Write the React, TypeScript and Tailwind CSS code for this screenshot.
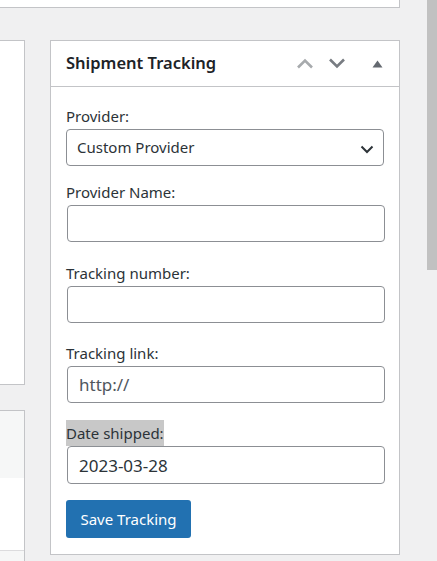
const font = { fontFamily: '"Noto Sans", "Open Sans", sans-serif' };

function Chevron({ up, color }: { up?: boolean; color: string }) {
  return (
    <svg width="18" height="11" viewBox="0 0 18 11" fill="none">
      <path
        d={up ? 'M2 9.5 L9 2.5 L16 9.5' : 'M2 1.5 L9 8.5 L16 1.5'}
        stroke={color}
        strokeWidth="2.6"
      />
    </svg>
  );
}

function Field({ label, value, gap = 'mt-[17px]' }: { label: string; value?: string; gap?: string }) {
  return (
    <div className={gap}>
      <label className="block h-[26px] text-[15px] leading-[26px] text-[#2c3338]">{label}</label>
      <input
        readOnly
        defaultValue={value}
        className="block w-[318px] h-[37px] ml-px rounded-[4px] border border-[#8c8f94] bg-white px-[11px] text-[17px] text-[#50575e] outline-none"
        style={font}
      />
    </div>
  );
}

export default function App() {
  return (
    <div className="flex w-[437px] h-[561px] overflow-hidden bg-[#f0f0f1]" style={font}>
      <div className="w-[400px] shrink-0">
        <div className="h-[8px] bg-white border-b border-r border-[#c3c4c7]" />
        <div className="mt-[32px] flex">
          {/* left column boxes */}
          <div className="w-[25px] shrink-0">
            <div className="h-[345px] bg-white border-t border-r border-b border-[#c3c4c7]" />
            <div className="mt-[25px] border-t border-r border-[#c3c4c7]">
              <div className="h-[67px] bg-[#f6f7f7]" />
              <div className="h-[73px] bg-white border-b border-[#dcdcde]" />
              <div className="h-[20px] bg-[#f6f7f7]" />
            </div>
          </div>

          {/* shipment tracking panel */}
          <div className="ml-[25px] w-[350px] h-[515px] bg-white border border-[#c3c4c7]">
            <div className="flex items-center h-[46px] border-b border-[#c3c4c7] pl-[15px] pr-[16px]">
              <h2 className="text-[16.5px] font-semibold text-[#1d2327] leading-none">Shipment Tracking</h2>
              <div className="ml-auto flex items-center">
                <Chevron up color="#a7aaad" />
                <div className="ml-[14px]">
                  <Chevron color="#787c82" />
                </div>
                <svg className="ml-[26px]" width="11" height="8" viewBox="0 0 11 8">
                  <path d="M0.5 7.5 L5.5 0.5 L10.5 7.5 Z" fill="#646970" />
                </svg>
              </div>
            </div>

            <div className="pl-[15px] pt-[16px]">
              <div>
                <label className="block h-[26px] text-[15px] leading-[26px] text-[#2c3338]">Provider:</label>
                <div className="relative w-[318px] h-[37px] rounded-[4px] border border-[#8c8f94] bg-white flex items-center pl-[10px]">
                  <span className="text-[15px] text-[#2c3338]">Custom Provider</span>
                  <svg className="absolute right-[9px] top-[15px]" width="14" height="9" viewBox="0 0 14 9" fill="none">
                    <path d="M1.5 1.5 L7 7 L12.5 1.5" stroke="#2c3338" strokeWidth="2" />
                  </svg>
                </div>
              </div>

              <Field label="Provider Name:" gap="mt-[13px]" />
              <Field label="Tracking number:" gap="mt-[18px]" />
              <Field label="Tracking link:" value="http://" />
              <div className="mt-[17px]">
                <label className="inline-block h-[26px] text-[15px] leading-[26px] text-[#2c3338] bg-[#c8c8c8]">Date shipped:</label>
                <input
                  readOnly
                  defaultValue="2023-03-28"
                  className="block w-[318px] h-[38px] ml-px rounded-[4px] border border-[#8c8f94] bg-white px-[11px] text-[17px] text-[#2c3338] outline-none"
                  style={font}
                />
              </div>

              <button className="mt-[16px] h-[38px] w-[125px] rounded-[3px] bg-[#2271b1] text-white text-[15px]">
                Save Tracking
              </button>
            </div>
          </div>
        </div>
      </div>
      <div className="ml-[27px] w-[10px] h-[270px] bg-[#c1c1c1]" />
    </div>
  );
}
